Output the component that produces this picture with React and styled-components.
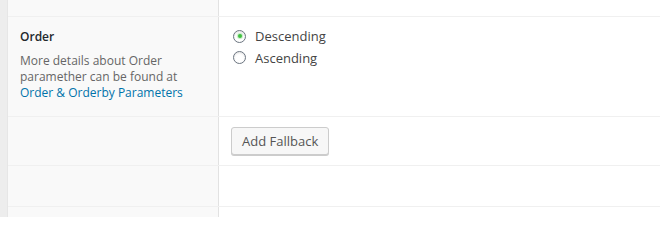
import React from "react";
import styled, { createGlobalStyle } from "styled-components";

const Global = createGlobalStyle`
  html, body { margin: 0; padding: 0; background: #fff; }
  body { font-family: "Open Sans", "Liberation Sans", sans-serif; font-size: 13px; color: #444; }
  * { box-sizing: border-box; }
`;

const Page = styled.div`
  display: flex;
  width: 660px;
  height: 217px;
  overflow: hidden;
`;

const Strip = styled.div`
  width: 8px;
  flex: none;
  background: #ededed;
  border-right: 1px solid #e6e6e6;
`;

const Table = styled.div`
  flex: 1;
  display: flex;
  flex-direction: column;
`;

const Row = styled.div`
  display: grid;
  grid-template-columns: 211px 1fr;
  height: ${(p) => p.$h}px;
  border-bottom: ${(p) => (p.$last ? "none" : "1px solid #f0f0f0")};
  flex: none;
`;

const Head = styled.div`
  background: #f9f9f9;
  border-right: 1px solid #e2e2e2;
  padding: ${(p) => p.$pad || "0 12px"};
`;

const Cell = styled.div`
  background: #fff;
  padding: ${(p) => p.$pad || "0 12px"};
`;

const Label = styled.div`
  font-weight: 600;
  font-size: 12px;
  color: #23282d;
  line-height: 18px;
`;

const Desc = styled.p`
  margin: 7px 0 0;
  font-size: 12px;
  color: #666;
  line-height: 16px;
`;

const Link = styled.a`
  color: #0073aa;
  text-decoration: none;
`;

const RadioList = styled.div`
  display: flex;
  flex-direction: column;
  gap: 3.5px;
`;

const RadioRow = styled.label`
  display: flex;
  align-items: center;
  gap: 9px;
  line-height: 18px;
  color: #444;
`;

const Circle = styled.span`
  width: 13px;
  height: 13px;
  margin-left: 1px;
  border-radius: 50%;
  border: 1px solid #6b7480;
  background: #fff;
  box-shadow: inset 0 1px 2px rgba(0, 0, 0, 0.12);
  display: flex;
  align-items: center;
  justify-content: center;
  flex: none;
  &::after {
    content: "";
    display: ${(p) => (p.$checked ? "block" : "none")};
    width: 4px;
    height: 4px;
    border-radius: 50%;
    background: #3fbf3f;
    box-shadow: 0 0 1px 1px rgba(80, 200, 80, 0.35);
  }
`;

const Button = styled.button`
  font-family: inherit;
  font-size: 13px;
  height: 28px;
  line-height: 26px;
  padding: 0 10px 1px;
  color: #555;
  background: #f7f7f7;
  border: 1px solid #cccccc;
  border-radius: 3px;
  box-shadow: 0 1px 0 #cccccc;
  cursor: pointer;
`;

export default function App() {
  return (
    <>
      <Global />
      <Page>
        <Strip />
        <Table>
          <Row $h={17}>
            <Head />
            <Cell />
          </Row>
          <Row $h={100}>
            <Head $pad="11px 12px 0">
              <Label>Order</Label>
              <Desc>
                More details about Order paramether can be found at{" "}
                <Link href="#">Order &amp; Orderby Parameters</Link>
              </Desc>
            </Head>
            <Cell $pad="10px 12px 0 13px">
              <RadioList>
                <RadioRow>
                  <Circle $checked />
                  Descending
                </RadioRow>
                <RadioRow>
                  <Circle />
                  Ascending
                </RadioRow>
              </RadioList>
            </Cell>
          </Row>
          <Row $h={49}>
            <Head />
            <Cell $pad="10px 12px 0">
              <Button>Add Fallback</Button>
            </Cell>
          </Row>
          <Row $h={41}>
            <Head />
            <Cell />
          </Row>
          <Row $h={20} $last>
            <Head />
            <Cell />
          </Row>
        </Table>
      </Page>
    </>
  );
}
